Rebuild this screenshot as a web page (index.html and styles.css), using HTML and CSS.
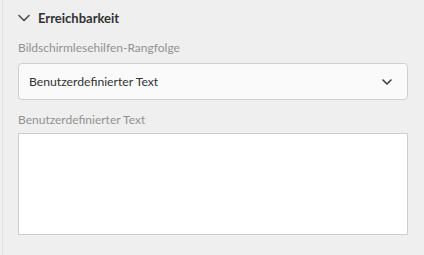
FILE: index.html
```html
<!DOCTYPE html>
<html lang="de">
<head>
<meta charset="utf-8">
<link rel="stylesheet" href="styles.css">
</head>
<body>
<div class="panel">
  <div class="section-head">
    <svg class="head-chevron" width="12" height="8" viewBox="0 0 12 8"><path d="M1 1.5 L6 6.5 L11 1.5" fill="none" stroke="#4b4b4b" stroke-width="1.6" stroke-linecap="round" stroke-linejoin="round"/></svg>
    <span class="section-title">Erreichbarkeit</span>
  </div>
  <div class="field">
    <label class="field-label">Bildschirmlesehilfen-Rangfolge</label>
    <div class="select">
      <span class="select-value">Benutzerdefinierter Text</span>
      <svg class="select-chevron" width="10" height="6" viewBox="0 0 10 6"><path d="M1 1 L5 5 L9 1" fill="none" stroke="#3c3c3c" stroke-width="1.6" stroke-linecap="round" stroke-linejoin="round"/></svg>
    </div>
  </div>
  <div class="field">
    <label class="field-label">Benutzerdefinierter Text</label>
    <div class="textarea"></div>
  </div>
</div>
</body>
</html>
```
FILE: styles.css
```css
html, body {
  margin: 0;
  padding: 0;
  background: #efefef;
}
body {
  width: 424px;
  height: 255px;
  overflow: hidden;
  font-family: Lato, "Open Sans", sans-serif;
}
.panel {
  margin-left: 2px;
  border-left: 1px solid #e2e2e2;
  height: 255px;
  box-sizing: border-box;
  padding: 8px 16px 0 15px;
}
.section-head {
  display: flex;
  align-items: center;
  height: 20px;
  gap: 8px;
}
.section-title {
  font-weight: bold;
  font-size: 13px;
  color: #323232;
}
.field {
  margin-top: 11px;
}
.field-label {
  display: block;
  font-size: 12px;
  color: #929292;
  line-height: 18px;
}
.select {
  margin-top: 6px;
  height: 37px;
  box-sizing: border-box;
  background: #fafafa;
  border: 1px solid #d0d0d0;
  border-radius: 4px;
  display: flex;
  align-items: center;
  justify-content: space-between;
  padding: 0 15px 0 10px;
}
.select-value {
  font-size: 12.2px;
  color: #323232;
}
.textarea {
  margin-top: 4px;
  height: 102px;
  box-sizing: border-box;
  background: #fff;
  border: 1px solid #cdcdcd;
}
```
